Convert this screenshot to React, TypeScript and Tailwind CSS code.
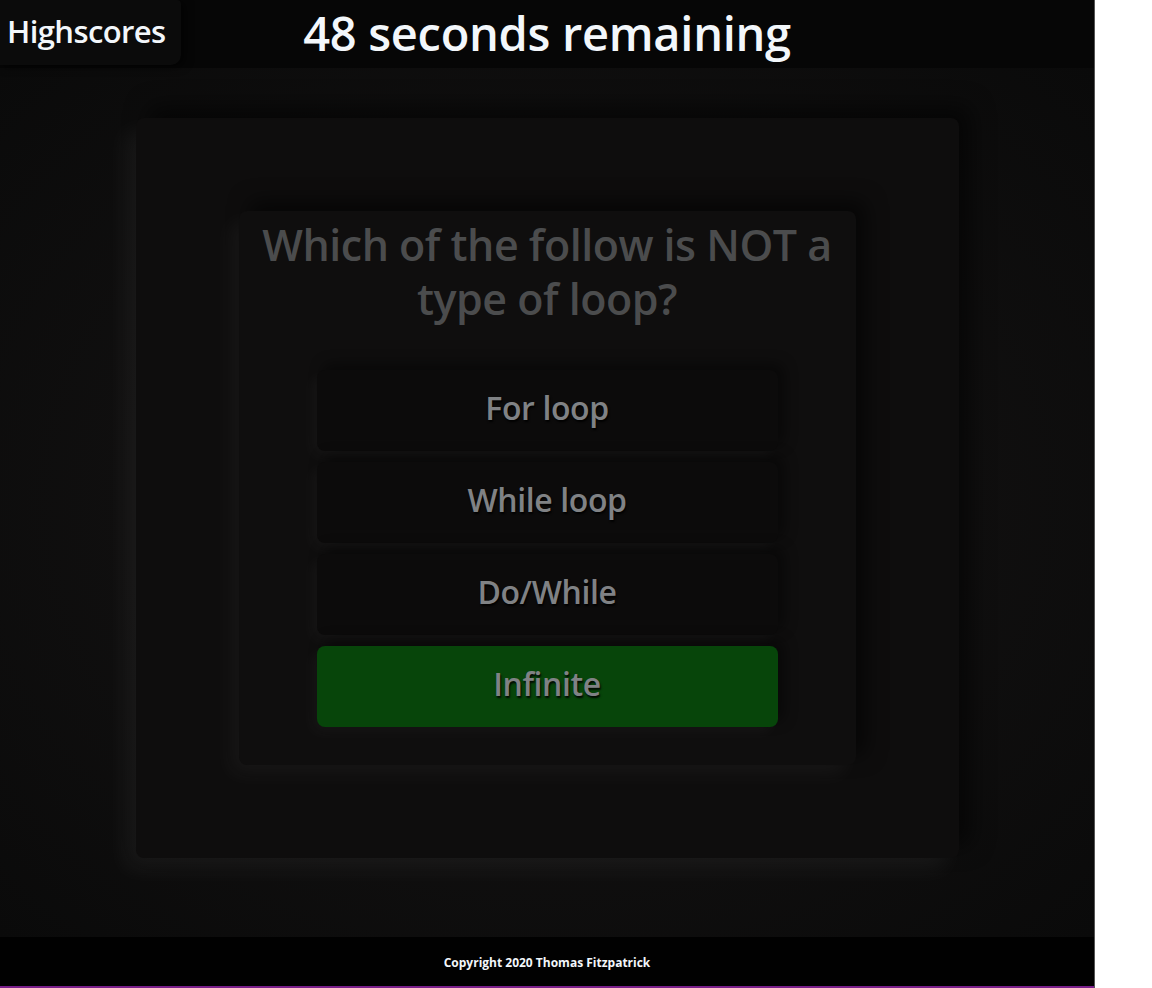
import React from "react";

const font = { fontFamily: '"Open Sans", "Noto Sans", sans-serif' };

function Answer({ label, correct }: { label: string; correct?: boolean }) {
  return (
    <div
      className={`flex h-[81px] w-[461px] items-center justify-center rounded-[8px] ${
        correct ? "bg-[#07450a]" : "bg-[#0c0b0b]"
      } shadow-[-6px_6px_14px_rgba(255,255,255,0.035),6px_-6px_14px_rgba(0,0,0,0.45)]`}
    >
      <span className="-mt-[5px] text-[32px] font-semibold tracking-[-0.4px] text-[#808285] [text-shadow:1px_2px_2px_rgba(0,0,0,0.9)]">
        {label}
      </span>
    </div>
  );
}

export default function App() {
  return (
    <div className="flex min-h-[988px] w-[1152px] bg-white" style={font}>
      <div className="flex w-[1095px] flex-col border-r border-[#555]">
        <div className="flex h-[986px] flex-col">
          {/* top bar */}
          <div className="relative flex h-[68px] items-start bg-[#060606]">
            <div className="flex h-[65px] w-[181px] items-center rounded-br-[10px] rounded-tr-[4px] bg-[#0b0b0b] pl-[7px] shadow-[4px_2px_8px_rgba(0,0,0,0.6)]">
              <span className="-mt-[2px] text-[31px] font-semibold tracking-[-0.6px] text-[#f3f7fb]">Highscores</span>
            </div>
            <div className="absolute left-0 right-0 top-0 flex h-[68px] items-center justify-center">
              <span className="-mt-[2px] text-[47px] font-semibold tracking-[-0.3px] text-[#f3f7fb]">
                48 seconds remaining
              </span>
            </div>
          </div>

          {/* main */}
          <div className="flex h-[869px] items-start justify-center bg-[radial-gradient(ellipse_at_center,#151414_0%,#111010_45%,#0a0a0a_100%)] pt-[50px]">
            <div className="flex h-[740px] w-[823px] items-center justify-center rounded-[8px] bg-[#0e0d0d] shadow-[-12px_12px_22px_rgba(255,255,255,0.05),12px_-12px_22px_rgba(0,0,0,0.55)]">
              <div className="flex h-[554px] w-[617px] flex-col items-center rounded-[8px] bg-[#0f0e0e] pt-[7px] shadow-[-10px_10px_20px_rgba(255,255,255,0.045),10px_-10px_20px_rgba(0,0,0,0.55)]">
                <div className="w-full text-center text-[43px] font-semibold leading-[54px] tracking-[-0.5px] text-[#4b4c4d]">
                  Which of the follow is NOT a<br />type of loop?
                </div>
                <div className="mt-[44px] flex flex-col gap-[11px]">
                  <Answer label="For loop" />
                  <Answer label="While loop" />
                  <Answer label="Do/While" />
                  <Answer label="Infinite" correct />
                </div>
              </div>
            </div>
          </div>

          {/* footer */}
          <div className="flex h-[49px] items-center justify-center bg-[#010101]">
            <span className="mt-[2px] text-[12px] font-bold text-[#f3f7fb]">Copyright 2020 Thomas Fitzpatrick</span>
          </div>
        </div>
        <div className="h-[2px] bg-[#7a1f8a]" />
      </div>
    </div>
  );
}
